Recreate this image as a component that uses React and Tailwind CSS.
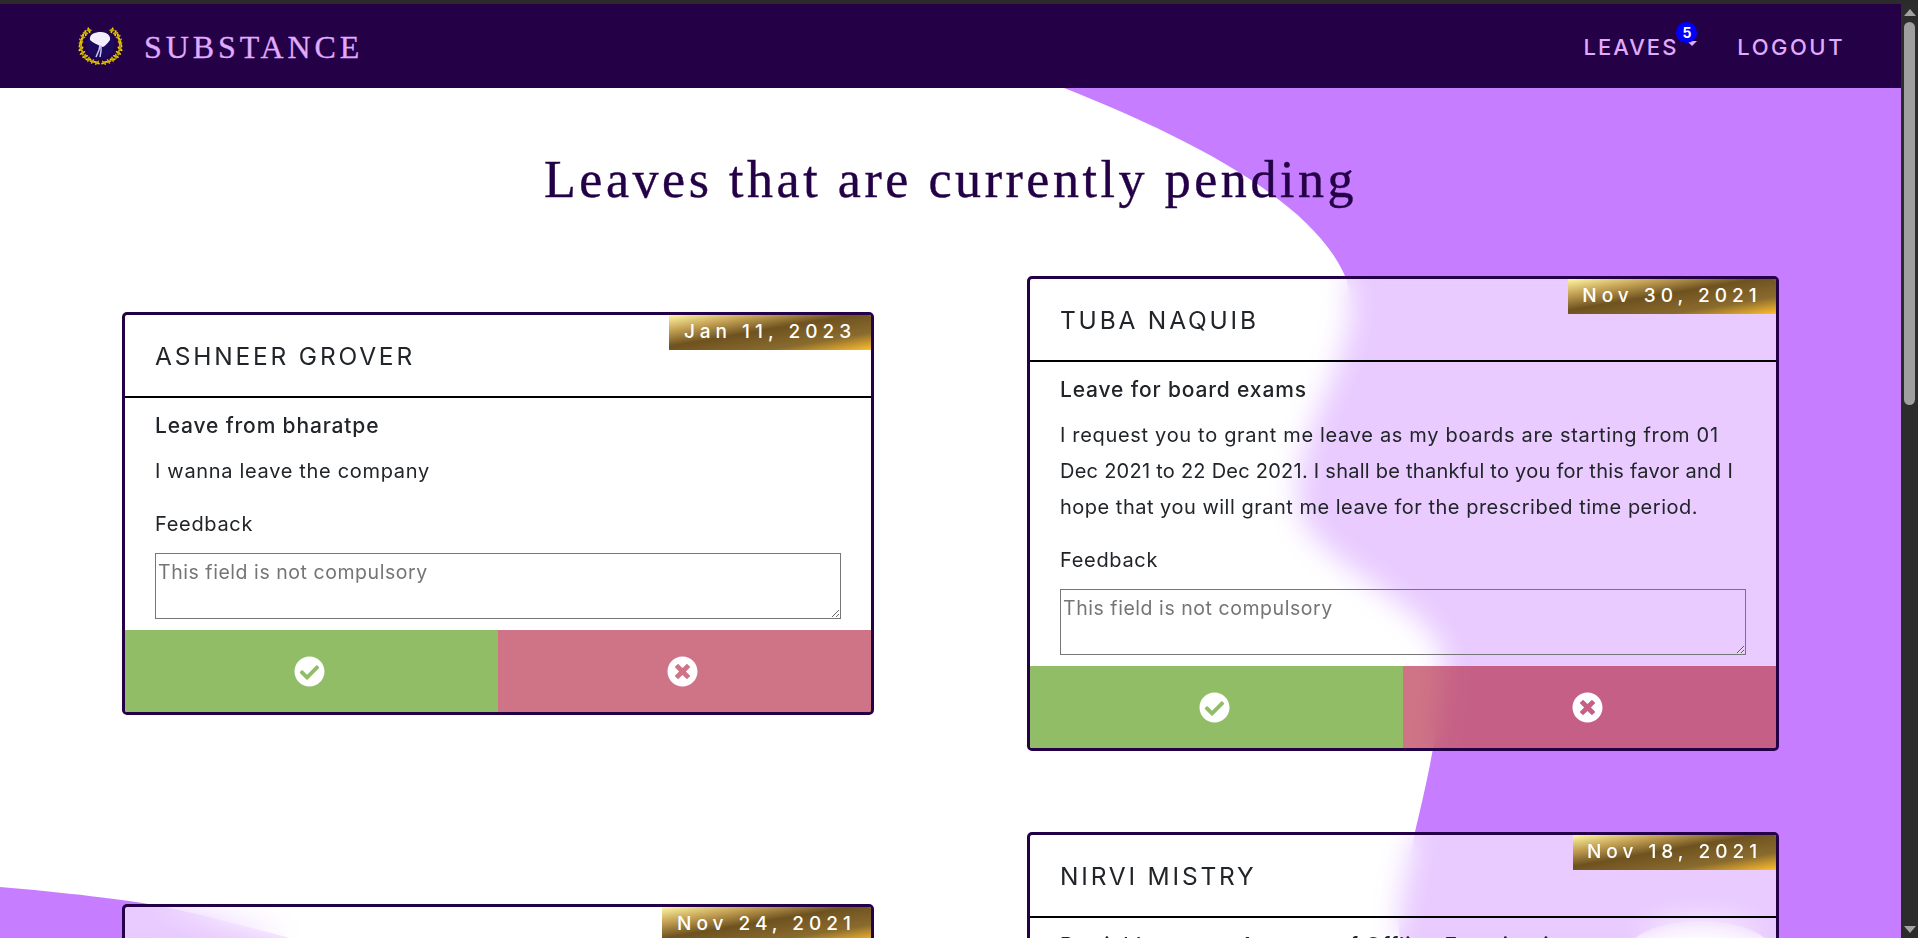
import { FaCheckCircle, FaTimesCircle } from 'react-icons/fa';

const serif = "font-['Liberation_Serif',serif]";

// leaves of one half of the wreath, walking from the top down to the stem
function wreathLeaves(side) {
  const out = [];
  for (let i = 0; i < 11; i++) {
    const deg = 125 + i * 13.5;
    const a = (deg * Math.PI) / 180;
    const x = 24.5 + 20 * Math.cos(a);
    const y = 19 - 18 * Math.sin(a);
    const px = side < 0 ? x : 49 - x;
    const rot = side < 0 ? deg - 180 + 35 : 180 - deg - 35;
    const rot2 = side < 0 ? deg - 180 - 35 : 180 - deg + 35;
    out.push(
      <ellipse key={`a${i}`} cx={px} cy={y} rx="1.1" ry="3.2" fill="#ecd000" transform={`rotate(${rot} ${px} ${y})`} />,
      <ellipse key={`b${i}`} cx={px} cy={y} rx="1" ry="2.9" fill="#c4a600" transform={`rotate(${rot2} ${px} ${y})`} />
    );
  }
  return out;
}

function Logo() {
  return (
    <svg width="50" height="40" viewBox="0 0 50 40" className="shrink-0">
      <circle cx="24.5" cy="19" r="14" fill="#1c0a5c" />
      {wreathLeaves(-1)}
      {wreathLeaves(1)}
      {/* tree */}
      <path d="M14 14 C13 8 19 6 25 6 C31 6 35 10 34 14 C32 17 29 20 27 21 L24 20 C21 18 17 17 14 14 Z" fill="#f3eeff" />
      <path d="M24 19 L23 24 L20 31 M25 20 L25 25 L24 31" stroke="#cfc4f5" strokeWidth="1.5" fill="none" />
    </svg>
  );
}

function LeaveCard({ name, date, dateW, title, children, clipped }) {
  return (
    <div className={`relative rounded-[5px] border-[3px] border-[#240046] bg-white/60 backdrop-blur-[14px] text-[#212529] overflow-hidden ${clipped ? 'min-h-[240px]' : ''}`}>
      <div className="relative h-[83px] border-b-2 border-black flex items-center pl-[30px]">
        <span className="text-[24.5px] tracking-[2.8px] uppercase pt-[1px]">{name}</span>
        <div
          className="absolute top-0 right-0 h-[35px] flex items-center justify-center text-white text-[19px] font-medium tracking-[5px] bg-[linear-gradient(to_bottom_right,#fdf8a5_0%,#c6a356_22%,#6e521f_45%,#8a6b2e_75%,#ffbe2e_100%)]"
          style={{ width: dateW }}
        >
          {date}
        </div>
      </div>
      {title && (
        <div className="px-[30px] pt-[14px]">
          <h5 className="text-[21px] leading-[28px] font-medium tracking-[0.85px]">{title}</h5>
          {children && (
            <p className="mt-[13px] text-[20px] leading-[36px] tracking-[0.68px] whitespace-nowrap">{children}</p>
          )}
          {!clipped && (
            <>
              <p className="mt-[21px] text-[20px] leading-[28px] tracking-[0.68px]">Feedback</p>
              <textarea
                readOnly
                placeholder="This field is not compulsory"
                className="block mt-[15px] w-full h-[66px] border border-[#767676] px-[2px] pt-[4px] text-[19.5px] leading-[28px] tracking-[0.55px] placeholder:text-[#757575] outline-none"
              />
            </>
          )}
        </div>
      )}
      {!clipped && title && (
        <div className="flex mt-[11px]">
          <div className="flex-1 h-[82px] bg-[#91bd67] flex items-center justify-center text-white pr-[5px]">
            <FaCheckCircle size={31} />
          </div>
          <div className="flex-1 h-[82px] bg-[#ae1735]/60 flex items-center justify-center text-white pr-[5px]">
            <FaTimesCircle size={31} />
          </div>
        </div>
      )}
    </div>
  );
}

export default function App() {
  return (
    <div className="w-full h-[938px] overflow-hidden flex flex-col bg-[#2b2b2b] font-['Inter',sans-serif]">
      <div className="h-1 shrink-0 bg-[#2b2b2b]" />
      <div className="flex flex-1 min-h-0">
        <div className="relative flex-1 min-w-0 bg-white overflow-hidden">
          {/* background blobs */}
          <svg className="absolute top-0 left-0" width="1901" height="934" viewBox="0 4 1901 934">
            <path
              d="M1064 88 C1170 130 1310 195 1345 276 C1370 345 1295 420 1297 500 C1300 560 1430 600 1443 656 C1446 700 1425 790 1415 832 C1405 880 1395 920 1400 938 L1901 938 L1901 88 Z"
              fill="#c77dff"
            />
            <path d="M0 887 C60 892 130 900 160 906 C200 914 240 925 290 938 L0 938 Z" fill="#c77dff" />
            <ellipse cx="1700" cy="955" rx="75" ry="34" fill="#fff" />
          </svg>

          <nav className="relative z-10 h-[84px] bg-[#240046] flex items-center justify-between pl-[76px] pr-[56px]">
            <div className="flex items-center gap-[18px]">
              <Logo />
              <span className={`${serif} text-[32px] tracking-[3.9px] text-[#e0aaff] mt-[2px] [-webkit-text-stroke:0.3px_#e0aaff]`}>SUBSTANCE</span>
            </div>
            <div className="flex items-center gap-[44px] text-[22px] text-[#e0aaff] font-medium mt-[2px]">
              <div className="relative pr-[15px] tracking-[2px]">
                LEAVES
                <span className="absolute right-[-4px] top-[10px] w-0 h-0 border-x-[5px] border-x-transparent border-t-[5px] border-t-[#e0aaff]" />
                <span className="absolute right-[-4px] top-[-9px] w-[21px] h-[21px] rounded-full bg-[#0000ff] text-white text-[14px] font-bold tracking-normal flex items-center justify-center">
                  5
                </span>
              </div>
              <span className="tracking-[2.5px]">LOGOUT</span>
            </div>
          </nav>

          <div className="relative z-10">
            <h1 className={`${serif} text-center text-[52px] leading-[60px] tracking-[3.55px] text-[#240046] mt-[62px] [-webkit-text-stroke:0.4px_#240046]`}>
              Leaves that are currently pending
            </h1>
            <div className="grid grid-cols-2 gap-x-[153px] px-[122px] mt-[65px]">
              <div className="flex flex-col gap-[189px] pt-[37px]">
                <LeaveCard name="Ashneer Grover" date="Jan 11, 2023" dateW={202} title="Leave from bharatpe">
                  I wanna leave the company
                </LeaveCard>
                <LeaveCard name="" date="Nov 24, 2021" dateW={209} clipped />
              </div>
              <div className="flex flex-col gap-[81px] pt-[1px]">
                <LeaveCard name="Tuba Naquib" date="Nov 30, 2021" dateW={208} title="Leave for board exams">
                  I request you to grant me leave as my boards are starting from 01
                  <br />
                  <span className="tracking-[0.25px]">Dec 2021 to 22 Dec 2021. I shall be thankful to you for this favor and I</span>
                  <br />
                  <span className="tracking-[0.5px]">hope that you will grant me leave for the prescribed time period.</span>
                </LeaveCard>
                <LeaveCard
                  name="Nirvi Mistry"
                  date="Nov 18, 2021"
                  dateW={203}
                  title="Partial Leave on Account of Offline Examination"
                  clipped
                />
              </div>
            </div>
          </div>
        </div>

        {/* page scrollbar */}
        <div className="w-[17px] shrink-0 bg-[#2c2c2c] flex flex-col items-center justify-between py-[5px]">
          <div className="flex flex-col items-center gap-[6px] w-full">
            <span className="w-0 h-0 border-x-[6px] border-x-transparent border-b-[7px] border-b-[#a3a3a3]" />
            <span className="w-[11px] h-[383px] rounded-full bg-[#9f9f9f]" />
          </div>
          <span className="w-0 h-0 border-x-[6px] border-x-transparent border-t-[7px] border-t-[#a3a3a3]" />
        </div>
      </div>
    </div>
  );
}
